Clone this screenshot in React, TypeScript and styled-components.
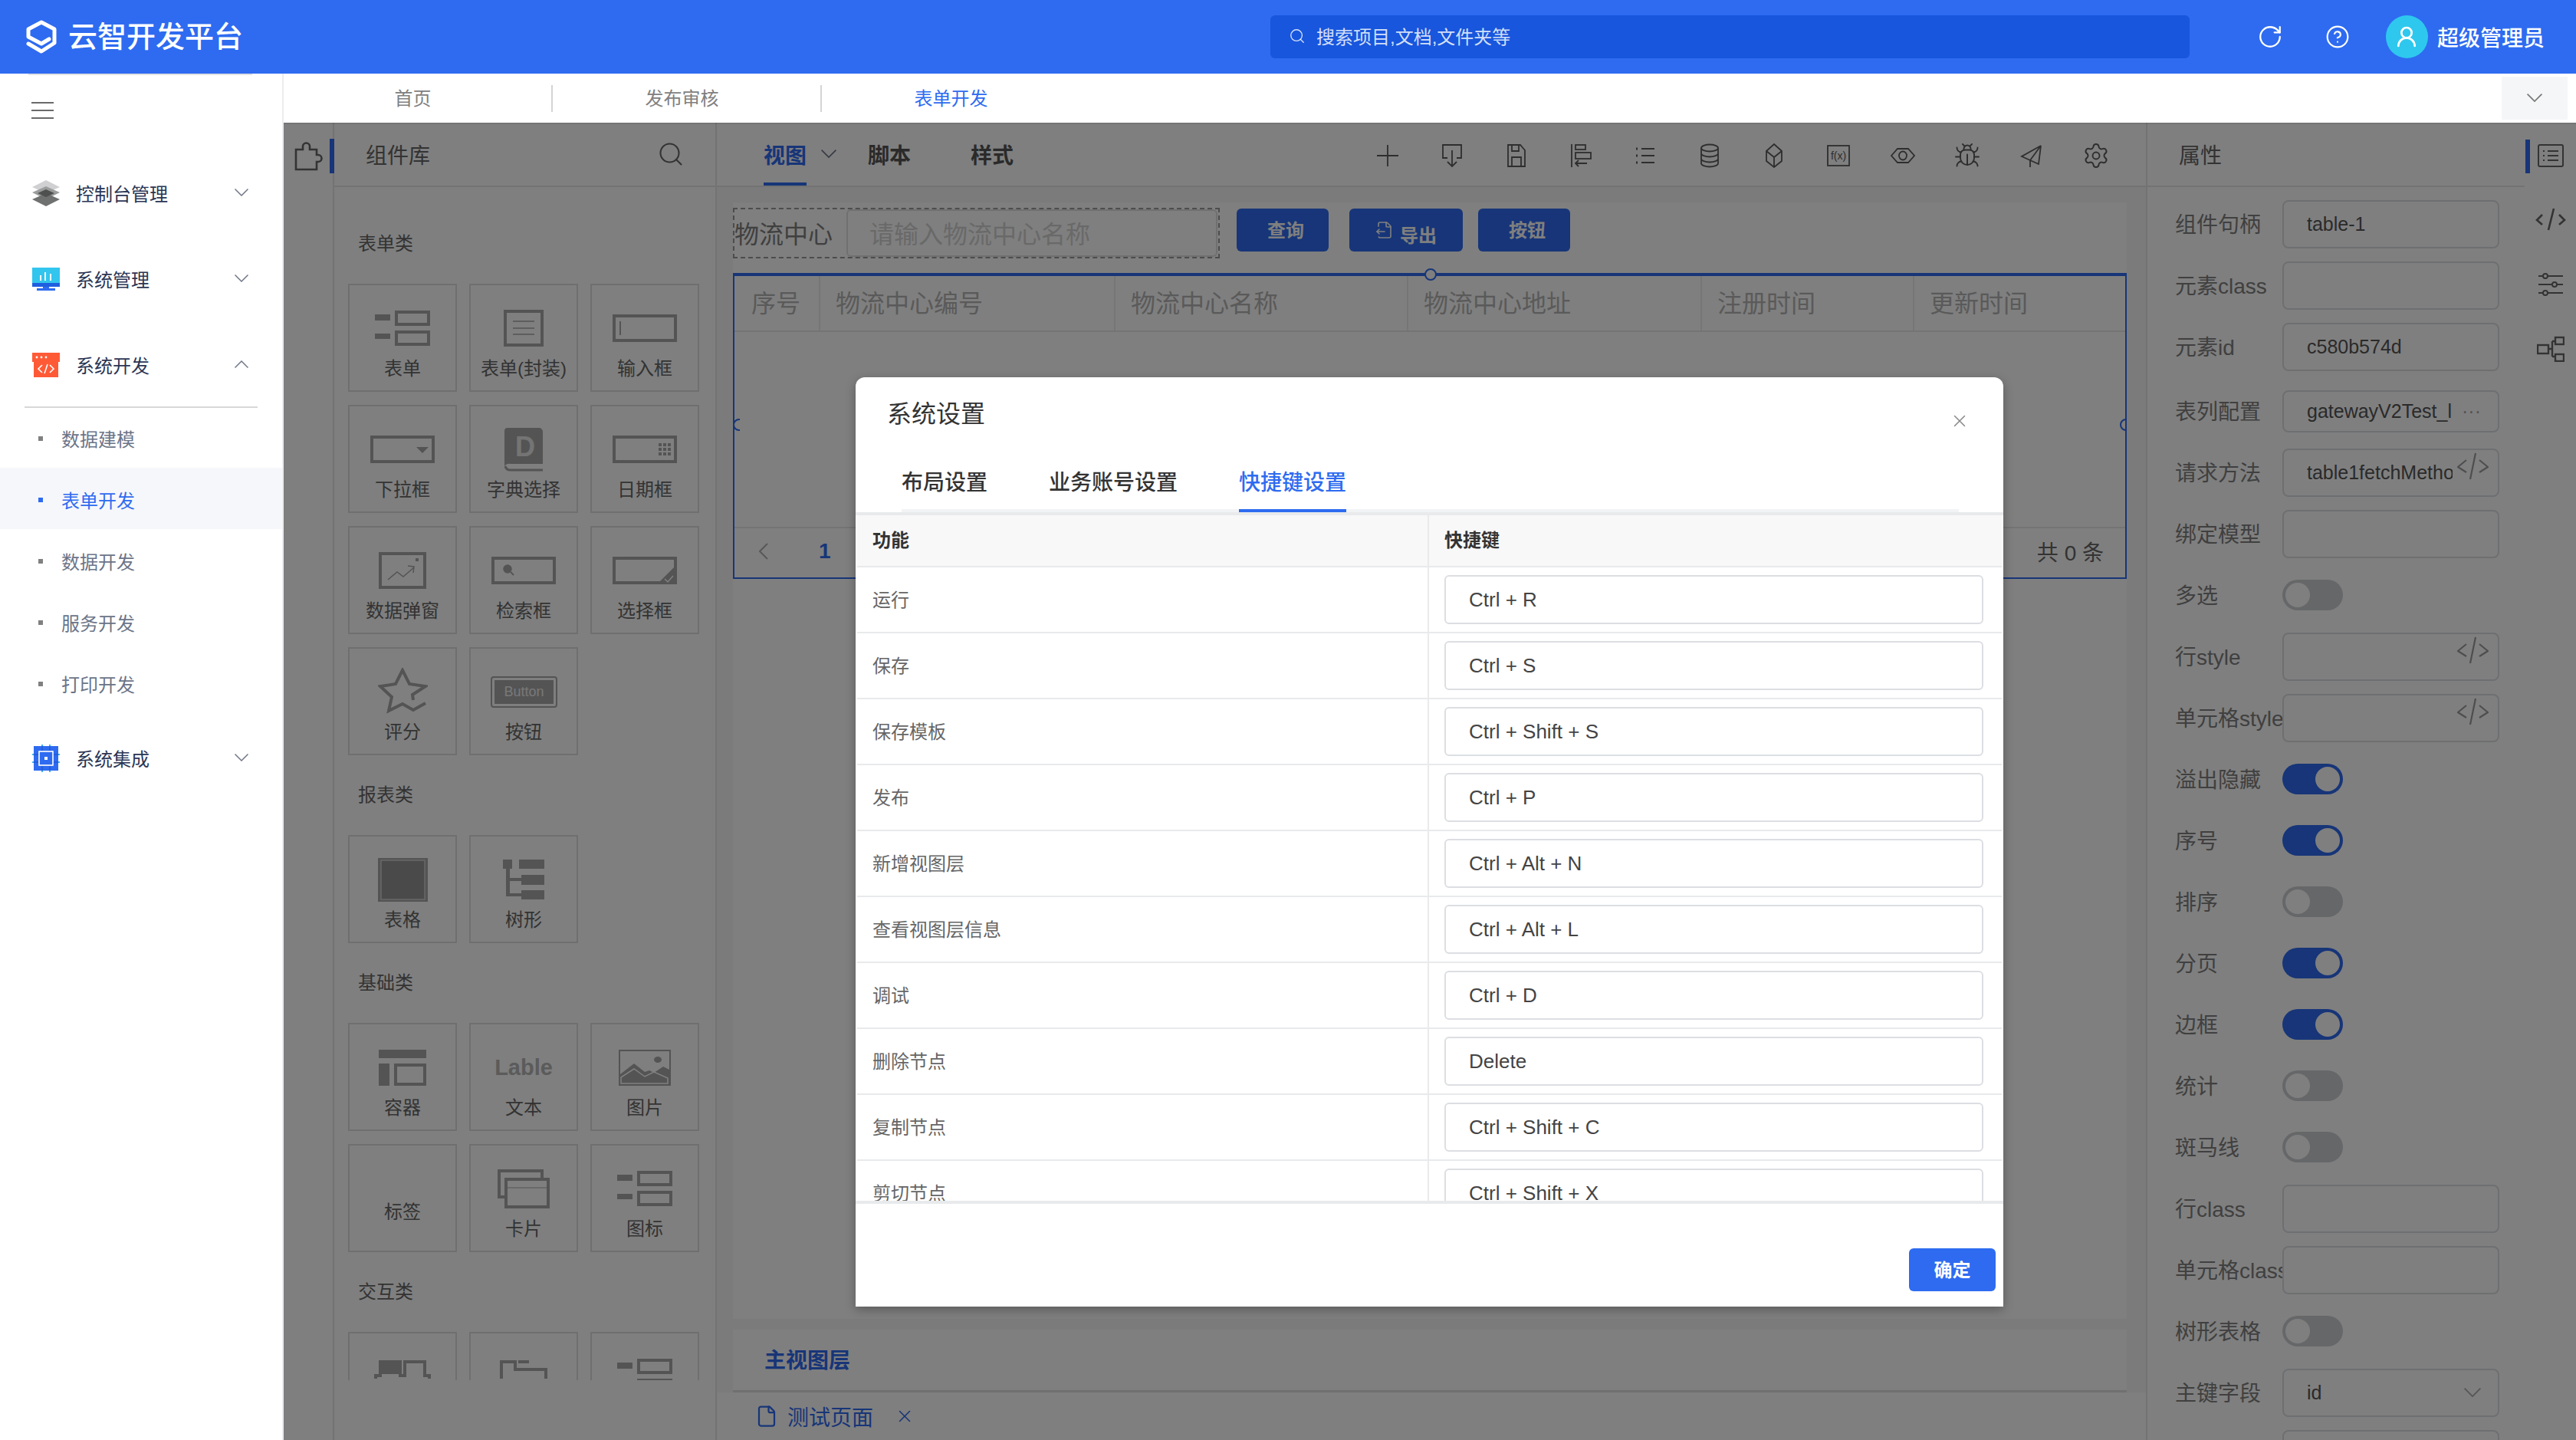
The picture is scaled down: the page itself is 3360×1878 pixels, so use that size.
import { ReactNode } from "react"
import styled, { createGlobalStyle } from "styled-components"
import { Search, RotateCw, CircleHelp, UserRound, X, Bug, Settings, File, FileOutput } from "lucide-react"

const BLUE = "#2e6bf0"

const GlobalStyle = createGlobalStyle`
  html, body { margin: 0; padding: 0; background: #fff; }
  body { font-family: "Liberation Sans", "Noto Sans CJK SC", sans-serif; }
  * { box-sizing: border-box; }
`

const Page = styled.div`
  width: 3360px;
  height: 1878px;
  overflow: hidden;
  display: flex;
  flex-direction: column;
`

/* header */
const TopBar = styled.header`
  height: 96px;
  flex: none;
  background: ${BLUE};
  display: flex;
  align-items: center;
  padding: 0 41px 0 34px;
  color: #fff;
`
const Brand = styled.div`
  display: flex;
  align-items: center;
  gap: 15px;
  font-size: 38px;
  font-weight: 500;
  line-height: 1;
`
const SearchBox = styled.div`
  width: 1199px;
  height: 56px;
  margin-left: auto;
  margin-right: 88px;
  background: #1756dd;
  border-radius: 6px;
  display: flex;
  align-items: center;
  gap: 14px;
  padding: 0 0 3px 24px;
  font-size: 24px;
  color: rgba(255, 255, 255, 0.82);
`
const TopIcon = styled.div<{ $gap: number }>`
  display: flex;
  margin-right: ${(p) => p.$gap}px;
`
const Avatar = styled.div`
  width: 55px;
  height: 56px;
  border-radius: 50%;
  background: #2ec8ee;
  display: flex;
  align-items: center;
  justify-content: center;
  margin-right: 12px;
`
const UserName = styled.span`
  font-size: 28px;
  font-weight: 500;
`

const Body = styled.div`
  flex: 1;
  min-height: 0;
  display: flex;
`

/* sidebar */
const Sidebar = styled.aside`
  width: 370px;
  flex: none;
  border-right: 2px solid #ececf0;
  background: #fff;
  position: relative;
  &::before {
    content: "";
    position: absolute;
    left: 37px;
    right: 39px;
    top: 0;
    height: 2px;
    background: #e2e2e2;
  }
`
const BurgerRow = styled.div`
  height: 101px;
  padding: 0 0 5px 41px;
  display: flex;
  align-items: center;
`
const MenuItem = styled.div<{ $offset?: number }>`
  height: 112px;
  margin-top: ${(p) => p.$offset || 0}px;
  display: flex;
  align-items: center;
  padding-left: 42px;
  padding-bottom: 3px;
  font-size: 24px;
  font-weight: 400;
  color: #2b3654;
`
const MenuIcon = styled.div`
  width: 36px;
  height: 36px;
  margin-right: 21px;
  display: flex;
  align-items: center;
  justify-content: center;
`
const MenuArrow = styled.div`
  margin-left: auto;
  margin-right: 44px;
  display: flex;
`
const SubDivider = styled.div`
  height: 2px;
  margin: -3px 32px -2px 32px;
  background: #d8d8d8;
`
const SubItem = styled.div<{ $active?: boolean }>`
  height: 80px;
  padding: 3px 0 0 50px;
  display: flex;
  align-items: center;
  gap: 24px;
  font-size: 24px;
  color: ${(p) => (p.$active ? BLUE : "#6b7488")};
  background: ${(p) => (p.$active ? "#f6f7fb" : "transparent")};
  &::before {
    content: "";
    width: 6px;
    height: 6px;
    background: ${(p) => (p.$active ? BLUE : "#808080")};
  }
`

/* tab bar */
const Right = styled.div`
  flex: 1;
  min-width: 0;
  display: flex;
  flex-direction: column;
`
const PageTabs = styled.div`
  height: 64px;
  flex: none;
  background: #fff;
  display: flex;
  align-items: center;
  font-size: 24px;
  color: #808080;
`
const PageTab = styled.div<{ $active?: boolean }>`
  width: 349px;
  padding: 0 12px 3px 0;
  text-align: center;
  color: ${(p) => (p.$active ? BLUE : "#808080")};
`
const TabSep = styled.div`
  width: 2px;
  height: 35px;
  background: #d4d4d4;
`
const TabMore = styled.div`
  width: 86px;
  height: 56px;
  margin-left: auto;
  margin-right: 11px;
  background: #f5f6f8;
  display: flex;
  align-items: center;
  justify-content: center;
`

/* designer */
const Main = styled.main`
  flex: 1;
  min-height: 0;
  position: relative;
  display: grid;
  grid-template-columns: 66px 499px 1866px 492px 67px;
  grid-template-rows: minmax(0, 1fr);
  overflow: hidden;
`
const Overlay = styled.div`
  position: absolute;
  inset: 0;
  z-index: 5;
  background: rgba(0, 0, 0, 0.5);
  box-shadow: inset 0 2px 0 rgba(0, 0, 0, 0.08);
`
const Strip = styled.div`
  border-right: 2px solid #e6e6e6;
  background: #fff;
  padding-top: 21px;
`
const StripTab = styled.div`
  height: 45px;
  margin-right: -2px;
  border-right: 6px solid ${BLUE};
  padding-left: 14px;
  display: flex;
  align-items: center;
`
const LibPanel = styled.section`
  border-right: 2px solid #e6e6e6;
  background: #fff;
  display: flex;
  flex-direction: column;
`
const PanelHead = styled.div`
  height: 84px;
  flex: none;
  border-bottom: 2px solid #e6e6e6;
  display: flex;
  align-items: center;
  justify-content: space-between;
  padding: 0 40px 0 41px;
  font-size: 28px;
  color: #666;
`
const LibBody = styled.div`
  height: 1556px;
  overflow: hidden;
  padding: 22px 0 0 18px;
`
const SectionTitle = styled.div`
  height: 104px;
  padding: 32px 0 32px 13px;
  font-size: 24px;
  line-height: 40px;
  color: #666;
`
const TileGrid = styled.div`
  display: grid;
  grid-template-columns: repeat(3, 142px);
  grid-auto-rows: 141px;
  column-gap: 16px;
  row-gap: 17px;
`
const TileBox = styled.div`
  border: 2px solid #dedede;
  display: flex;
  flex-direction: column;
  align-items: center;
  color: #a8a8a8;
  padding-top: 22px;
`
const TileIcon = styled.div<{ $empty?: boolean }>`
  height: ${(p) => (p.$empty ? 46 : 68)}px;
  flex: none;
  display: flex;
  align-items: center;
  justify-content: center;
`
const TileLabel = styled.div`
  margin-top: 1px;
  font-size: 24px;
  line-height: 36px;
  color: #666;
  white-space: nowrap;
`
const LableWord = styled.span`
  font-size: 29px;
  font-weight: 700;
  color: #b6b6b6;
`

/* center */
const Center = styled.section`
  background: #f6f6f6;
  border-right: 2px solid #e6e6e6;
  display: flex;
  flex-direction: column;
  min-height: 0;
`
const DesignHead = styled.div`
  height: 84px;
  flex: none;
  background: #fff;
  border-bottom: 2px solid #e6e6e6;
  display: flex;
  align-items: stretch;
  padding: 0 23px 0 61px;
`
const ViewTab = styled.div<{ $active?: boolean; $gap: number }>`
  height: 82px;
  padding-top: 4px;
  margin-right: ${(p) => p.$gap}px;
  border-bottom: 4px solid ${(p) => (p.$active ? BLUE : "transparent")};
  display: flex;
  align-items: center;
  font-size: 28px;
  font-weight: 700;
  color: ${(p) => (p.$active ? BLUE : "#555")};
`
const ViewArrow = styled.div`
  display: flex;
  align-items: center;
  margin: 0 20px 0 -68px;
  padding-left: 5px;
  width: 46px;
`
const ToolBar = styled.div`
  margin-left: auto;
  display: flex;
  align-items: center;
  padding-top: 4px;
`
const ToolBtn = styled.div`
  width: 84px;
  display: flex;
  justify-content: center;
  color: #5c5c5c;
`
const Canvas = styled.div`
  height: 1456px;
  flex: none;
  margin: 20px 25px 0 21px;
  background: #fff;
  padding-top: 7px;
`
const QueryRow = styled.div`
  display: flex;
  align-items: flex-start;
  height: 66px;
`
const QueryForm = styled.div`
  width: 635px;
  height: 66px;
  border: 2px dashed #9a9a9a;
  display: flex;
  align-items: center;
  font-size: 32px;
  color: #808080;
  margin-right: 22px;
`
const QueryLabel = styled.span`
  padding-bottom: 3px;
`
const QueryInput = styled.div`
  width: 484px;
  height: 62px;
  margin-left: 18px;
  border: 2px solid #e0e0e0;
  border-radius: 6px;
  padding: 0 0 3px 28px;
  display: flex;
  align-items: center;
  color: #d2d2d2;
`
const QueryBtn = styled.div<{ $w: number; $gap: number; $pad?: boolean }>`
  width: ${(p) => p.$w}px;
  height: 56px;
  margin-top: 1px;
  margin-right: ${(p) => p.$gap}px;
  padding: ${(p) => (p.$pad ? "0 0 3px 8px" : "0")};
  border-radius: 6px;
  background: ${BLUE};
  color: #fff;
  font-size: 24px;
  font-weight: 700;
  display: flex;
  align-items: center;
  justify-content: center;
  gap: 8px;
`
const ExportText = styled.span`
  padding-top: 10px;
`
const TableBox = styled.div`
  position: relative;
  height: 399px;
  margin-top: 19px;
  border: 2px solid ${BLUE};
  border-top-width: 4px;
  display: flex;
  flex-direction: column;
`
const TopHandle = styled.i`
  position: absolute;
  top: -10px;
  left: 900px;
  width: 16px;
  height: 16px;
  border-radius: 50%;
  border: 2px solid ${BLUE};
  background: #fff;
`
/* only the left half of the ring shows on the side handles */
const SideHandle = styled.i<{ $side: "left" | "right" }>`
  position: absolute;
  top: 186px;
  ${(p) => (p.$side === "left" ? "left: -2px;" : "right: -9px;")}
  width: 16px;
  height: 16px;
  border-radius: 50%;
  border: 2px solid ${BLUE};
  clip-path: inset(0 7px 0 0);
`
const TableHead = styled.div`
  height: 73px;
  flex: none;
  border-bottom: 2px solid #e8e8e8;
  display: grid;
  grid-template-columns: 110px 385px 382px 383px 277px 1fr;
  font-size: 32px;
  color: #b4b4b4;
`
const HeadCell = styled.div`
  display: flex;
  align-items: center;
  padding: 0 0 6px 22px;
  & + & {
    padding-left: 20px;
    border-left: 2px solid #ececec;
  }
`
const TableEmpty = styled.div`
  flex: 1;
`
const Pager = styled.div`
  height: 66px;
  flex: none;
  border-top: 2px solid #e8e8e8;
  display: flex;
  align-items: center;
  padding: 0 28px 4px 32px;
  font-size: 28px;
  color: #666;
`
const PagerPrev = styled.span`
  display: flex;
  color: #b0b0b0;
`
const PagerNum = styled.span`
  margin-left: 66px;
  color: ${BLUE};
  font-weight: 700;
`
const PagerTotal = styled.span`
  margin-left: auto;
`
const LayerBar = styled.div`
  height: 82px;
  flex: none;
  margin: 14px 25px 0 21px;
  padding: 0 0 3px 41px;
  background: #fff;
  border-bottom: 3px solid #e0e0e0;
  display: flex;
  align-items: center;
  font-size: 28px;
  font-weight: 700;
  color: ${BLUE};
`
const PageFile = styled.div`
  flex: 1;
  min-height: 0;
  padding: 0 0 0 50px;
  display: flex;
  align-items: center;
  background: #fff;
  font-size: 28px;
  color: ${BLUE};
  gap: 12px;
`
const PageClose = styled.span`
  display: flex;
  margin-left: 16px;
`

/* attributes */
const PropPanel = styled.section`
  border-left: 2px solid #e6e6e6;
  border-right: 2px solid #e6e6e6;
  background: #fff;
  display: flex;
  flex-direction: column;
  margin-left: -2px;
  margin-right: -2px;
  min-height: 0;
`
const PropBody = styled.div`
  flex: 1;
  min-height: 0;
  overflow: hidden;
  padding-top: 8px;
`
const PropRow = styled.div<{ $shift?: boolean }>`
  height: 80px;
  margin-top: ${(p) => (p.$shift ? 4 : 0)}px;
  padding-left: 36px;
  display: flex;
  align-items: center;
  font-size: 28px;
  color: #808080;
`
const PropLabel = styled.div`
  width: 140px;
  flex: none;
  overflow: hidden;
  white-space: nowrap;
  padding-bottom: 3px;
`
const PropInput = styled.div<{ $short?: boolean }>`
  width: 283px;
  height: ${(p) => (p.$short ? 55 : 63)}px;
  border: 2px solid #dcdee2;
  border-radius: 8px;
  padding: 0 12px 0 30px;
  display: flex;
  align-items: center;
  font-size: 25px;
  color: #555;
`
const PropValue = styled.span`
  max-width: 190px;
  overflow: hidden;
  white-space: nowrap;
`
const PropAction = styled.span`
  margin-left: auto;
  margin-right: 10px;
  display: flex;
  color: #a6a6a6;
`
const CodeMark = styled.span`
  margin-top: -16px;
  margin-left: auto;
  display: flex;
  color: #9c9c9c;
`
const Toggle = styled.div<{ $on?: boolean }>`
  width: 79px;
  height: 40px;
  border-radius: 20px;
  background: ${(p) => (p.$on ? BLUE : "#cdced2")};
  display: flex;
  align-items: center;
  justify-content: ${(p) => (p.$on ? "flex-end" : "flex-start")};
  padding: 0 4px;
  &::after {
    content: "";
    width: 32px;
    height: 32px;
    border-radius: 50%;
    background: #fff;
  }
`
const SideRail = styled.div`
  background: #fff;
  padding-top: 26px;
`
const RailItem = styled.div<{ $active?: boolean }>`
  height: 84px;
  display: flex;
  justify-content: center;
  color: #666;
  position: relative;
  &::before {
    content: "";
    display: ${(p) => (p.$active ? "block" : "none")};
    position: absolute;
    left: 1px;
    top: -4px;
    width: 6px;
    height: 44px;
    background: ${BLUE};
  }
`

/* dialog */
const Dialog = styled.div`
  position: absolute;
  z-index: 6;
  left: 746px;
  top: 332px;
  width: 1497px;
  height: 1212px;
  background: #fff;
  border-radius: 12px 12px 0 0;
  box-shadow: 0 4px 14px rgba(0, 0, 0, 0.3);
  display: flex;
  flex-direction: column;
`
const DialogTitle = styled.div`
  height: 100px;
  flex: none;
  padding: 28px 0 0 41px;
  font-size: 32px;
  line-height: 40px;
  color: #333;
`
const DialogClose = styled.div`
  position: absolute;
  right: 44px;
  top: 44px;
  display: flex;
  color: #8a8a8a;
`
const DialogTabs = styled.div`
  height: 76px;
  flex: none;
  margin: 0 58px 0 60px;
  border-bottom: 4px solid #f2f3f5;
  display: flex;
  gap: 80px;
`
const DialogTab = styled.div<{ $active?: boolean }>`
  height: 76px;
  padding-bottom: 2px;
  border-bottom: 4px solid ${(p) => (p.$active ? BLUE : "transparent")};
  display: flex;
  align-items: center;
  font-size: 28px;
  font-weight: 500;
  color: ${(p) => (p.$active ? BLUE : "#333")};
`
const KeyTable = styled.div`
  height: 902px;
  flex: none;
  overflow: hidden;
  border-top: 4px solid #e8eaec;
  border-bottom: 4px solid #e8eaec;
  padding: 0 2px;
`
const KeyRow = styled.div<{ $head?: boolean }>`
  height: ${(p) => (p.$head ? 66 : 86)}px;
  flex: none;
  display: grid;
  grid-template-columns: 744px 1fr;
  background: ${(p) => (p.$head ? "#f8f8f9" : "#fff")};
  border-top: ${(p) => (p.$head ? "0" : "2px solid #e8eaec")};
  font-size: 24px;
  font-weight: ${(p) => (p.$head ? 700 : 400)};
  color: ${(p) => (p.$head ? "#333" : "#666")};
`
const KeyCell = styled.div<{ $head?: boolean }>`
  display: flex;
  align-items: center;
  padding: 0 0 ${(p) => (p.$head ? 5 : 3)}px 20px;
  & + & {
    border-left: 2px solid #e8eaec;
  }
`
const KeyInputCell = styled.div`
  display: flex;
  align-items: center;
  padding-left: 20px;
  border-left: 2px solid #e8eaec;
`
const KeyInput = styled.div`
  width: 703px;
  height: 64px;
  border: 2px solid #dcdee2;
  border-radius: 6px;
  padding-left: 30px;
  display: flex;
  align-items: center;
  font-size: 26px;
  font-weight: 400;
  color: #444;
`
const DialogFoot = styled.div`
  flex: 1;
  display: flex;
  justify-content: flex-end;
  padding: 58px 10px 0 0;
`
const ConfirmBtn = styled.div`
  width: 113px;
  height: 56px;
  padding-bottom: 3px;
  border-radius: 6px;
  background: ${BLUE};
  color: #fff;
  font-size: 24px;
  font-weight: 700;
  display: flex;
  align-items: center;
  justify-content: center;
`

/* drawings */
const Chevron = ({ up, color = "#6f7687", w = 18 }: { up?: boolean; color?: string; w?: number }) => (
  <svg width={w} height={w * 0.56} viewBox="0 0 18 10" fill="none" stroke={color} strokeWidth="1.5">
    <polyline points={up ? "0.5,9.5 9,1 17.5,9.5" : "0.5,0.5 9,9 17.5,0.5"} />
  </svg>
)

const Logo = () => (
  <svg width="40" height="44" viewBox="0 0 40 44" fill="none" stroke="#fff" strokeWidth="5" strokeLinejoin="round" strokeLinecap="round">
    <path d="M30 25 20 31 3 22V12L20 3l17 9v18L20 41 3 31" />
  </svg>
)

const Layers = () => (
  <svg width="36" height="34" viewBox="0 0 36 34">
    <polygon points="18,0 36,9 18,17 0,9" fill="#d0d0d2" />
    <polygon points="18,8 36,16 18,25 0,16" fill="#9a9c9c" />
    <polygon points="18,17 36,25 18,34 0,25" fill="#6f7070" />
    <polygon points="18,12 29,17 18,22 7,17" fill="#4e4f4f" />
  </svg>
)
const Monitor = () => (
  <svg width="36" height="30" viewBox="0 0 36 30">
    <rect width="36" height="20" fill="#32c5ee" />
    <rect y="20" width="36" height="5" fill="#1e5fe0" />
    <rect x="14" y="25" width="8" height="3" fill="#2e6bf0" />
    <rect x="6" y="27" width="24" height="3" fill="#2e6bf0" />
    <rect x="10" y="10" width="2" height="7" fill="#fff" />
    <rect x="16" y="6" width="2" height="11" fill="#fff" />
    <rect x="23" y="8" width="2" height="9" fill="#fff" />
  </svg>
)
const CodeWindow = () => (
  <svg width="36" height="32" viewBox="0 0 36 32">
    <rect width="36" height="12" fill="#ff5a36" />
    <rect x="2" y="10" width="32" height="22" fill="#ff5a36" />
    <circle cx="6" cy="6" r="1.4" fill="#fff" />
    <circle cx="12" cy="6" r="1.4" fill="#fff" />
    <circle cx="18" cy="6" r="1.4" fill="#fff" />
    <path d="M13 16l-5 5 5 5M23 16l5 5-5 5M20 15l-4 12" fill="none" stroke="#fff" strokeWidth="1.6" />
  </svg>
)
const Chip = () => (
  <svg width="36" height="36" viewBox="0 0 36 36">
    <rect x="2" y="2" width="32" height="32" fill="#2e6bf0" />
    <path d="M13 0v36M23 0v36M0 13h36M0 23h36" stroke="#1e50c8" strokeWidth="1" />
    <path d="M13 0v2M23 0v2M13 34v2M23 34v2M0 13h2M0 23h2M34 13h2M34 23h2" stroke="#22b8f0" strokeWidth="1.5" />
    <rect x="9" y="9" width="18" height="18" fill="#2e6bf0" stroke="#fff" strokeWidth="1.6" />
    <rect x="16" y="16" width="4" height="4" fill="#fff" />
  </svg>
)
const Burger = () => (
  <svg width="29" height="22" viewBox="0 0 29 22" stroke="#6a6a6a" strokeWidth="2">
    <path d="M0 1h29M0 11h29M0 21h29" />
  </svg>
)
const Puzzle = () => (
  <svg width="38" height="38" viewBox="0 0 38 38" fill="none" stroke="#666" strokeWidth="2.6">
    <path d="M2 10h9V6a4.5 4.5 0 0 1 9 0v4h9v7h2a4.5 4.5 0 0 1 0 9h-2v10H2Z" />
  </svg>
)

const box = (w: number, h: number) => ({ width: w, height: h, viewBox: `0 0 ${w} ${h}`, fill: "none", stroke: "currentColor" })

const FormIcon = () => (
  <svg {...box(72, 46)} strokeWidth="4">
    <rect x="0" y="5" width="20" height="8" fill="currentColor" stroke="none" />
    <rect x="0" y="30" width="20" height="7" fill="currentColor" stroke="none" />
    <rect x="28" y="2" width="42" height="16" />
    <rect x="28" y="28" width="42" height="16" />
  </svg>
)
const DocIcon = () => (
  <svg {...box(52, 48)} strokeWidth="4">
    <rect x="2" y="2" width="48" height="44" />
    <path d="M12 15h28M12 24h28M12 32h28" strokeWidth="1.5" />
  </svg>
)
const InputIcon = ({ children }: { children?: ReactNode }) => (
  <svg {...box(84, 36)} strokeWidth="4">
    <rect x="2" y="2" width="80" height="32" />
    {children}
  </svg>
)
const DictIcon = () => (
  <svg {...box(50, 57)}>
    <path d="M4 0h41a5 5 0 0 1 5 5v42H8a8 8 0 0 0-8 3V4a4 4 0 0 1 4-4Z" fill="currentColor" stroke="none" />
    <path d="M1 50a7 7 0 0 0 7 5h42" strokeWidth="3" />
    <text x="14" y="37" fontSize="36" fontWeight="700" fontFamily="Liberation Sans" fill="#e8e8e8" stroke="none">D</text>
  </svg>
)
const ChartIcon = () => (
  <svg {...box(62, 48)} strokeWidth="4">
    <rect x="2" y="2" width="58" height="44" />
    <path d="M12 36l12-10 8 6 14-12M38 18l8 1-1 8" strokeWidth="1.5" />
    <rect x="48" y="8" width="4" height="4" fill="currentColor" stroke="none" />
  </svg>
)
const StarIcon = () => (
  <svg {...box(65, 62)} strokeWidth="4">
    <path d="M46 42l-1-7 17-11-21-3L32 3 23 21 3 24l15 14-4 18 18-9 14 8 16-9" />
  </svg>
)
const ButtonIcon = () => (
  <svg {...box(87, 41)} strokeWidth="2">
    <rect x="1" y="1" width="85" height="39" rx="3" />
    <rect x="5" y="5" width="77" height="31" fill="currentColor" stroke="none" />
    <text x="43.5" y="26" textAnchor="middle" fontSize="18" fontFamily="Liberation Sans" fill="#f0f0f0" stroke="none">Button</text>
  </svg>
)
const GridIcon = () => (
  <svg {...box(65, 57)} strokeWidth="1.5">
    <rect x="0" y="0" width="65" height="57" fill="currentColor" stroke="none" />
    <rect x="4" y="3" width="57" height="51" fill="#959595" stroke="#d0d0d0" />
  </svg>
)
const TreeIcon = () => (
  <svg {...box(54, 52)} fill="currentColor" stroke="none">
    <rect x="0" y="0" width="12" height="12" />
    <rect x="21" y="0" width="33" height="12" />
    <rect x="24" y="20" width="30" height="13" />
    <rect x="24" y="40" width="30" height="12" />
    <rect x="4" y="12" width="5" height="36" />
    <rect x="4" y="24" width="20" height="4" />
    <rect x="4" y="44" width="20" height="4" />
  </svg>
)
const ContainerIcon = () => (
  <svg {...box(62, 47)} strokeWidth="4">
    <rect x="0" y="0" width="62" height="11" fill="currentColor" stroke="none" />
    <rect x="0" y="18" width="14" height="29" fill="currentColor" stroke="none" />
    <rect x="22" y="20" width="38" height="25" />
  </svg>
)
const ImageIcon = () => (
  <svg {...box(68, 47)} strokeWidth="1.5">
    <path d="M0 0h68v47H0Z" fill="currentColor" stroke="none" />
    <path d="M2 2h64v24l-8-4-12 8-6-3-6 2-14-11L2 32Z" fill="#fff" stroke="none" />
    <ellipse cx="51" cy="13" rx="5" ry="4" fill="currentColor" stroke="none" />
    <path d="M3 44V36l17-11 14 10 12-6 18 8v7Z" stroke="#fff" />
  </svg>
)
const CardsIcon = () => (
  <svg {...box(68, 51)} strokeWidth="4">
    <rect x="2" y="2" width="56" height="34" />
    <rect x="11" y="13" width="55" height="36" fill="#fff" />
    <path d="M11 24h55" strokeWidth="1" />
  </svg>
)
const TabsIcon = () => (
  <svg {...box(74, 46)} strokeWidth="4">
    <path d="M2 26v-4h6V4h26v18h6V4h26v18h6v4" />
    <rect x="10" y="6" width="22" height="14" fill="currentColor" stroke="none" />
  </svg>
)
const FolderIcon = () => (
  <svg {...box(62, 46)} strokeWidth="4">
    <path d="M2 26V4h18v10h40v12M24 4h14" />
  </svg>
)

const tile = (label: string, icon?: ReactNode) => ({ label, icon })
const sections = [
  {
    title: "表单类",
    tiles: [
      tile("表单", <FormIcon />),
      tile("表单(封装)", <DocIcon />),
      tile("输入框", <InputIcon><path d="M10 9v18" strokeWidth="2" /></InputIcon>),
      tile("下拉框", <InputIcon><polygon points="60,15 76,15 68,23" fill="currentColor" stroke="none" /></InputIcon>),
      tile("字典选择", <DictIcon />),
      tile("日期框", <InputIcon><path d="M60 12h16M60 18h16M60 24h16" strokeWidth="4" strokeDasharray="4 2" /></InputIcon>),
      tile("数据弹窗", <ChartIcon />),
      tile("检索框", <InputIcon><circle cx="21" cy="16" r="5" fill="currentColor" strokeWidth="1.5" /><path d="M25 20l4 4" strokeWidth="2" /></InputIcon>),
      tile("选择框", <InputIcon><polygon points="84,10 84,36 58,36" fill="currentColor" stroke="none" /><path d="M68 29l4 4 7-8" stroke="#fff" strokeWidth="1.5" /></InputIcon>),
      tile("评分", <StarIcon />),
      tile("按钮", <ButtonIcon />),
    ],
  },
  { title: "报表类", tiles: [tile("表格", <GridIcon />), tile("树形", <TreeIcon />)] },
  {
    title: "基础类",
    tiles: [
      tile("容器", <ContainerIcon />),
      tile("文本", <LableWord>Lable</LableWord>),
      tile("图片", <ImageIcon />),
      tile("标签"),
      tile("卡片", <CardsIcon />),
      tile("图标", <FormIcon />),
    ],
  },
  { title: "交互类", tiles: [tile("", <TabsIcon />), tile("", <FolderIcon />), tile("", <FormIcon />)] },
]

const ToolSvg = ({ children }: { children: ReactNode }) => (
  <svg width="32" height="32" viewBox="0 0 32 32" fill="none" stroke="currentColor" strokeWidth="1.8">
    {children}
  </svg>
)
const toolIcons: ReactNode[] = [
  <ToolSvg><path d="M16 2v28M2 16h28" /></ToolSvg>,
  <ToolSvg><path d="M10 19H4V2h24v17h-6M16 9v21M10 24l6 6 6-6" /></ToolSvg>,
  <ToolSvg><path d="M5 2h16l6 7v21H5ZM10 2v8h9V2M10 30V18h12v12" /></ToolSvg>,
  <ToolSvg><path d="M4 1v30" /><rect x="9" y="2" width="13" height="6" /><rect x="9" y="12" width="20" height="8" /><path d="M24 26H9M13 22l-4 4 4 4" /></ToolSvg>,
  <ToolSvg><path d="M11 7h17M11 16h17M11 25h17" /><path d="M4 7h2M4 16h2M4 25h2" strokeWidth="3" /></ToolSvg>,
  <ToolSvg><ellipse cx="16" cy="6" rx="11" ry="4.5" /><path d="M5 6v20c0 2.5 5 4.5 11 4.5s11-2 11-4.5V6M5 13c0 2.5 5 4.5 11 4.5s11-2 11-4.5M5 20c0 2.5 5 4.5 11 4.5s11-2 11-4.5" /></ToolSvg>,
  <ToolSvg><path d="M16 1 26 10V23L16 31 6 23V10ZM6 10l10 8 10-8M16 18v13" /></ToolSvg>,
  <ToolSvg><rect x="2" y="3" width="28" height="26" /><text x="16" y="21" textAnchor="middle" fontSize="14" fontFamily="Liberation Sans" fill="currentColor" stroke="none">f(x)</text></ToolSvg>,
  <ToolSvg><path d="M1 16 9 7h14l8 9-8 9H9Z" /><ellipse cx="16" cy="16" rx="5" ry="5.5" /></ToolSvg>,
  <Bug size={36} strokeWidth={1.3} />,
  <ToolSvg><path d="M28 3 3 17l11 5ZM28 3l-3 24-11-5M14 22v9" /></ToolSvg>,
  <Settings size={36} strokeWidth={1.3} />,
]

const CodeGlyph = () => (
  <svg width="41" height="38" viewBox="0 0 41 38" fill="none" stroke="currentColor" strokeWidth="2.2">
    <path d="M12 11 1 20l11 7M29 11l11 9-11 7M24 2 17 36" />
  </svg>
)

type Prop =
  | { label: string; kind: "input"; value?: string; code?: boolean; more?: boolean; arrow?: boolean; shift?: boolean }
  | { label: string; kind: "toggle"; on?: boolean }

const props: Prop[] = [
  { label: "组件句柄", kind: "input", value: "table-1" },
  { label: "元素class", kind: "input" },
  { label: "元素id", kind: "input", value: "c580b574d" },
  { label: "表列配置", kind: "input", value: "gatewayV2Test_list", more: true, shift: true },
  { label: "请求方法", kind: "input", value: "table1fetchMethod", code: true },
  { label: "绑定模型", kind: "input" },
  { label: "多选", kind: "toggle" },
  { label: "行style", kind: "input", code: true },
  { label: "单元格style", kind: "input", code: true },
  { label: "溢出隐藏", kind: "toggle", on: true },
  { label: "序号", kind: "toggle", on: true },
  { label: "排序", kind: "toggle" },
  { label: "分页", kind: "toggle", on: true },
  { label: "边框", kind: "toggle", on: true },
  { label: "统计", kind: "toggle" },
  { label: "斑马线", kind: "toggle" },
  { label: "行class", kind: "input" },
  { label: "单元格class", kind: "input" },
  { label: "树形表格", kind: "toggle" },
  { label: "主键字段", kind: "input", value: "id", arrow: true },
  { label: "", kind: "input" },
]

const shortcuts = [
  ["运行", "Ctrl + R"],
  ["保存", "Ctrl + S"],
  ["保存模板", "Ctrl + Shift + S"],
  ["发布", "Ctrl + P"],
  ["新增视图层", "Ctrl + Alt + N"],
  ["查看视图层信息", "Ctrl + Alt + L"],
  ["调试", "Ctrl + D"],
  ["删除节点", "Delete"],
  ["复制节点", "Ctrl + Shift + C"],
  ["剪切节点", "Ctrl + Shift + X"],
]

const columns = ["序号", "物流中心编号", "物流中心名称", "物流中心地址", "注册时间", "更新时间"]

function App() {
  return (
    <Page>
      <GlobalStyle />
      <TopBar>
        <Brand>
          <Logo />
          云智开发平台
        </Brand>
        <SearchBox>
          <Search size={22} strokeWidth={1.5} />
          搜索项目,文档,文件夹等
        </SearchBox>
        <TopIcon $gap={55}><RotateCw size={34} strokeWidth={1.6} /></TopIcon>
        <TopIcon $gap={47}><CircleHelp size={32} strokeWidth={1.6} /></TopIcon>
        <Avatar><UserRound size={32} strokeWidth={2} /></Avatar>
        <UserName>超级管理员</UserName>
      </TopBar>
      <Body>
        <Sidebar>
          <BurgerRow><Burger /></BurgerRow>
          <MenuItem>
            <MenuIcon><Layers /></MenuIcon>控制台管理
            <MenuArrow><Chevron /></MenuArrow>
          </MenuItem>
          <MenuItem>
            <MenuIcon><Monitor /></MenuIcon>系统管理
            <MenuArrow><Chevron /></MenuArrow>
          </MenuItem>
          <MenuItem>
            <MenuIcon><CodeWindow /></MenuIcon>系统开发
            <MenuArrow><Chevron up /></MenuArrow>
          </MenuItem>
          <SubDivider />
          <SubItem>数据建模</SubItem>
          <SubItem $active>表单开发</SubItem>
          <SubItem>数据开发</SubItem>
          <SubItem>服务开发</SubItem>
          <SubItem>打印开发</SubItem>
          <MenuItem $offset={4}>
            <MenuIcon><Chip /></MenuIcon>系统集成
            <MenuArrow><Chevron /></MenuArrow>
          </MenuItem>
        </Sidebar>
        <Right>
          <PageTabs>
            <PageTab>首页</PageTab>
            <TabSep />
            <PageTab>发布审核</PageTab>
            <TabSep />
            <PageTab $active>表单开发</PageTab>
            <TabMore><Chevron color="#777" w={20} /></TabMore>
          </PageTabs>
          <Main>
            <Strip>
              <StripTab><Puzzle /></StripTab>
            </Strip>
            <LibPanel>
              <PanelHead>
                组件库
                <Search size={36} strokeWidth={1.4} color="#666" />
              </PanelHead>
              <LibBody>
                {sections.map((s) => (
                  <div key={s.title}>
                    <SectionTitle>{s.title}</SectionTitle>
                    <TileGrid>
                      {s.tiles.map((t, i) => (
                        <TileBox key={i}>
                          <TileIcon $empty={!t.icon}>{t.icon}</TileIcon>
                          <TileLabel>{t.label}</TileLabel>
                        </TileBox>
                      ))}
                    </TileGrid>
                  </div>
                ))}
              </LibBody>
            </LibPanel>
            <Center>
              <DesignHead>
                <ViewTab $active $gap={82}>视图</ViewTab>
                <ViewArrow><Chevron w={20} /></ViewArrow>
                <ViewTab $gap={78}>脚本</ViewTab>
                <ViewTab $gap={0}>样式</ViewTab>
                <ToolBar>
                  {toolIcons.map((icon, i) => (
                    <ToolBtn key={i}>{icon}</ToolBtn>
                  ))}
                </ToolBar>
              </DesignHead>
              <Canvas>
                <QueryRow>
                  <QueryForm>
                    <QueryLabel>物流中心</QueryLabel>
                    <QueryInput>请输入物流中心名称</QueryInput>
                  </QueryForm>
                  <QueryBtn $w={120} $gap={27} $pad>查询</QueryBtn>
                  <QueryBtn $w={148} $gap={20}>
                    <FileOutput size={24} strokeWidth={1.6} />
                    <ExportText>导出</ExportText>
                  </QueryBtn>
                  <QueryBtn $w={120} $gap={0} $pad>按钮</QueryBtn>
                </QueryRow>
                <TableBox>
                  <TopHandle />
                  <SideHandle $side="left" />
                  <SideHandle $side="right" />
                  <TableHead>
                    {columns.map((c) => (
                      <HeadCell key={c}>{c}</HeadCell>
                    ))}
                  </TableHead>
                  <TableEmpty />
                  <Pager>
                    <PagerPrev>
                      <svg width="12" height="22" viewBox="0 0 12 22" fill="none" stroke="currentColor" strokeWidth="2">
                        <path d="M11 1 1 11l10 10" />
                      </svg>
                    </PagerPrev>
                    <PagerNum>1</PagerNum>
                    <PagerTotal>共 0 条</PagerTotal>
                  </Pager>
                </TableBox>
              </Canvas>
              <LayerBar>主视图层</LayerBar>
              <PageFile>
                <File size={30} strokeWidth={1.8} />
                测试页面
                <PageClose><X size={26} strokeWidth={1.4} /></PageClose>
              </PageFile>
            </Center>
            <PropPanel>
              <PanelHead>属性</PanelHead>
              <PropBody>
                {props.map((p, i) => (
                  <PropRow key={i} $shift={p.kind === "input" && p.shift}>
                    <PropLabel>{p.label}</PropLabel>
                    {p.kind === "toggle" ? (
                      <Toggle $on={p.on} />
                    ) : (
                      <PropInput $short={p.shift}>
                        {p.value && <PropValue>{p.value}</PropValue>}
                        {p.more && <PropAction>···</PropAction>}
                        {p.code && <CodeMark><CodeGlyph /></CodeMark>}
                        {p.arrow && <PropAction><Chevron color="#aaa" w={22} /></PropAction>}
                      </PropInput>
                    )}
                  </PropRow>
                ))}
              </PropBody>
            </PropPanel>
            <SideRail>
              <RailItem $active>
                <svg width="34" height="34" viewBox="0 0 34 34" fill="none" stroke="currentColor" strokeWidth="2">
                  <rect x="1" y="3" width="32" height="28" rx="2" />
                  <path d="M13 11h14M13 17h14M13 23h14M7 11h2M7 17h2M7 23h2" />
                </svg>
              </RailItem>
              <RailItem>
                <svg width="40" height="34" viewBox="0 0 40 34" fill="none" stroke="currentColor" strokeWidth="2.6">
                  <path d="M9 10 2 17l7 6M31 10l7 7-7 6M24 2l-7 28" />
                </svg>
              </RailItem>
              <RailItem>
                <svg width="34" height="34" viewBox="0 0 34 34" fill="none" stroke="currentColor" strokeWidth="2">
                  <path d="M1 6h32M1 17h32M1 28h32" />
                  <circle cx="10" cy="6" r="3" fill="#fff" />
                  <circle cx="22" cy="17" r="3" fill="#fff" />
                  <circle cx="10" cy="28" r="3" fill="#fff" />
                </svg>
              </RailItem>
              <RailItem>
                <svg width="36" height="34" viewBox="0 0 36 34" fill="none" stroke="currentColor" strokeWidth="2.4">
                  <rect x="1" y="12" width="14" height="11" />
                  <rect x="24" y="2" width="11" height="9" />
                  <rect x="24" y="24" width="11" height="9" />
                  <path d="M15 17h5M20 7v20M20 7h4M20 27h4" />
                </svg>
              </RailItem>
            </SideRail>
            <Overlay />
            <Dialog>
              <DialogTitle>系统设置</DialogTitle>
              <DialogClose><X size={26} strokeWidth={1.4} /></DialogClose>
              <DialogTabs>
                <DialogTab>布局设置</DialogTab>
                <DialogTab>业务账号设置</DialogTab>
                <DialogTab $active>快捷键设置</DialogTab>
              </DialogTabs>
              <KeyTable>
                <KeyRow $head>
                  <KeyCell $head>功能</KeyCell>
                  <KeyCell $head>快捷键</KeyCell>
                </KeyRow>
                {shortcuts.map(([name, keys]) => (
                  <KeyRow key={name}>
                    <KeyCell>{name}</KeyCell>
                    <KeyInputCell><KeyInput>{keys}</KeyInput></KeyInputCell>
                  </KeyRow>
                ))}
              </KeyTable>
              <DialogFoot>
                <ConfirmBtn>确定</ConfirmBtn>
              </DialogFoot>
            </Dialog>
          </Main>
        </Right>
      </Body>
    </Page>
  )
}

export default App
